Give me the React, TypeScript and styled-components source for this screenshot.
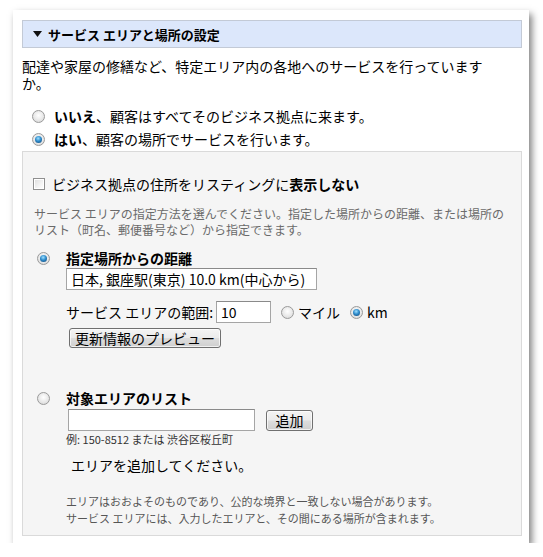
import React from 'react';
import styled, { createGlobalStyle } from 'styled-components';

const GlobalStyle = createGlobalStyle`
  html, body { margin: 0; padding: 0; background: #fff; }
  body {
    font-family: "Noto Sans CJK JP", "Noto Sans", sans-serif;
    color: #000;
  }
  * { box-sizing: border-box; }
`;

const Card = styled.div`
  margin: 10px 0 0 13px;
  width: 516px;
  padding: 10px 7px 7px 9px;
  background: #fff;
  box-shadow: 3px 4px 7px rgba(0, 0, 0, 0.5);
`;

const Header = styled.div`
  height: 28px;
  display: flex;
  align-items: center;
  gap: 6px;
  padding-left: 10px;
  background: #dce7fb;
  border: 1px solid #c3cad6;
  font-size: 13px;
  font-weight: bold;
  line-height: 1;
`;

const Para = styled.p`
  margin: 10px 0 0;
  width: 470px;
  font-size: 14px;
  line-height: 17px;
`;

const OptionList = styled.div`
  margin-top: 16px;
  display: flex;
  flex-direction: column;
  gap: 6px;
  padding-left: 10px;
`;

const OptionRow = styled.label`
  display: flex;
  align-items: center;
  gap: 9px;
  font-size: 14px;
  line-height: 17px;
`;

const RadioDot = styled.span<{ $on?: boolean }>`
  flex: none;
  width: 13px;
  height: 13px;
  border-radius: 50%;
  border: 1px solid #9a9a9a;
  background: radial-gradient(circle at 50% 40%, #ffffff 0%, #e6e6e6 60%, #cfcfcf 100%);
  display: flex;
  align-items: center;
  justify-content: center;
  &::after {
    content: '';
    display: ${(p) => (p.$on ? 'block' : 'none')};
    width: 7px;
    height: 7px;
    border-radius: 50%;
    background: radial-gradient(circle at 45% 35%, #9fe0ff 0%, #2f8ccc 45%, #0d3f6e 100%);
  }
`;

const Panel = styled.div`
  margin-top: 3px;
  background: #f5f5f5;
  border: 1px solid #dadada;
  padding: 22px 10px 8px 10px;
`;

const CheckRow = styled.label`
  display: flex;
  align-items: center;
  gap: 7px;
  font-size: 14px;
  line-height: 20px;
`;

const CheckBox = styled.span`
  flex: none;
  width: 12px;
  height: 12px;
  border: 1px solid #8f8f8f;
  background: linear-gradient(135deg, #dcdcdc 0%, #f4f4f4 60%, #ffffff 100%);
  box-shadow: inset 0 0 0 1px #fff;
`;

const Desc = styled.p`
  margin: 12px 0 0 1px;
  font-size: 12px;
  line-height: 16px;
  color: #6a6a6a;
`;

const Section = styled.div<{ $top: number }>`
  margin-top: ${(p) => p.$top}px;
  display: grid;
  grid-template-columns: 20px 1fr;
  column-gap: 13px;
`;

const SectionRadio = styled.div`
  display: flex;
  align-items: center;
  justify-content: center;
  height: 20px;
`;

const SectionBody = styled.div`
  display: flex;
  flex-direction: column;
  align-items: flex-start;
`;

const SectionTitle = styled.div`
  font-size: 14px;
  font-weight: bold;
  line-height: 20px;
`;

const TextInput = styled.div<{ $w: number }>`
  width: ${(p) => p.$w}px;
  height: 22px;
  background: #fff;
  border: 1px solid #a5a5a5;
  border-top-color: #8a8a8a;
  padding: 0 4px;
  font-size: 14px;
  line-height: 20px;
  white-space: nowrap;
  overflow: hidden;
`;

const RangeRow = styled.div`
  margin-top: 11px;
  display: flex;
  align-items: center;
  font-size: 14px;
  line-height: 20px;
`;

const RangeLabel = styled.span`
  margin-right: 3px;
`;

const UnitOption = styled.label`
  display: flex;
  align-items: center;
  gap: 4px;
  margin-left: 10px;
  font-family: "Noto Sans CJK JP", "Liberation Sans", sans-serif;
`;

const Button = styled.button`
  height: 20px;
  padding: 0 5px;
  border: 1px solid #707070;
  border-radius: 3px;
  background: linear-gradient(#f4f4f4 0%, #ebebeb 48%, #dddddd 52%, #cfcfcf 100%);
  font-family: "Noto Sans CJK JP", sans-serif;
  font-size: 14px;
  line-height: 17px;
  color: #000;
  box-shadow: inset 0 0 0 1px rgba(255, 255, 255, 0.7);
`;

const PreviewButton = styled(Button)`
  margin-top: 5px;
  margin-left: 3px;
`;

const AddRow = styled.div`
  display: flex;
  align-items: center;
  gap: 11px;
  margin-top: 1px;
  padding-left: 2px;
`;

const AddButton = styled(Button)`
  width: 47px;
  height: 21px;
  padding: 0;
`;

const Example = styled.div`
  font-size: 11px;
  line-height: 16px;
  color: #333;
`;

const Empty = styled.div`
  margin: 8px 0 0 5px;
  font-size: 14px;
  line-height: 20px;
`;

const Footnote = styled.p`
  margin: 18px 0 0;
  font-size: 11px;
  line-height: 17px;
  color: #555;
`;

const Caret = () => (
  <svg width="9" height="6" viewBox="0 0 9 6" aria-hidden>
    <polygon points="0,0 9,0 4.5,6" fill="#111" />
  </svg>
);

export default function App() {
  return (
    <>
      <GlobalStyle />
      <Card>
        <Header>
          <Caret />
          <span>サービス エリアと場所の設定</span>
        </Header>
        <Para>配達や家屋の修繕など、特定エリア内の各地へのサービスを行っていますか。</Para>
        <OptionList>
          <OptionRow>
            <RadioDot />
            <span>
              <b>いいえ</b>、顧客はすべてそのビジネス拠点に来ます。
            </span>
          </OptionRow>
          <OptionRow>
            <RadioDot $on />
            <span>
              <b>はい</b>、顧客の場所でサービスを行います。
            </span>
          </OptionRow>
        </OptionList>
        <Panel>
          <CheckRow>
            <CheckBox />
            <span>
              ビジネス拠点の住所をリスティングに<b>表示しない</b>
            </span>
          </CheckRow>
          <Desc>
            サービス エリアの指定方法を選んでください。指定した場所からの距離、または場所のリスト（町名、郵便番号など）から指定できます。
          </Desc>
          <Section $top={10}>
            <SectionRadio>
              <RadioDot $on />
            </SectionRadio>
            <SectionBody>
              <SectionTitle>指定場所からの距離</SectionTitle>
              <TextInput $w={251}>日本, 銀座駅(東京) 10.0 km(中心から)</TextInput>
              <RangeRow>
                <RangeLabel>サービス エリアの範囲:</RangeLabel>
                <TextInput $w={55}>10</TextInput>
                <UnitOption>
                  <RadioDot />
                  マイル
                </UnitOption>
                <UnitOption>
                  <RadioDot $on />
                  km
                </UnitOption>
              </RangeRow>
              <PreviewButton>更新情報のプレビュー</PreviewButton>
            </SectionBody>
          </Section>
          <Section $top={40}>
            <SectionRadio>
              <RadioDot />
            </SectionRadio>
            <SectionBody>
              <SectionTitle>対象エリアのリスト</SectionTitle>
              <AddRow>
                <TextInput $w={187} />
                <AddButton>追加</AddButton>
              </AddRow>
              <Example>例: 150-8512 または 渋谷区桜丘町</Example>
              <Empty>エリアを追加してください。</Empty>
              <Footnote>
                エリアはおおよそのものであり、公的な境界と一致しない場合があります。
                <br />
                サービス エリアには、入力したエリアと、その間にある場所が含まれます。
              </Footnote>
            </SectionBody>
          </Section>
        </Panel>
      </Card>
    </>
  );
}
